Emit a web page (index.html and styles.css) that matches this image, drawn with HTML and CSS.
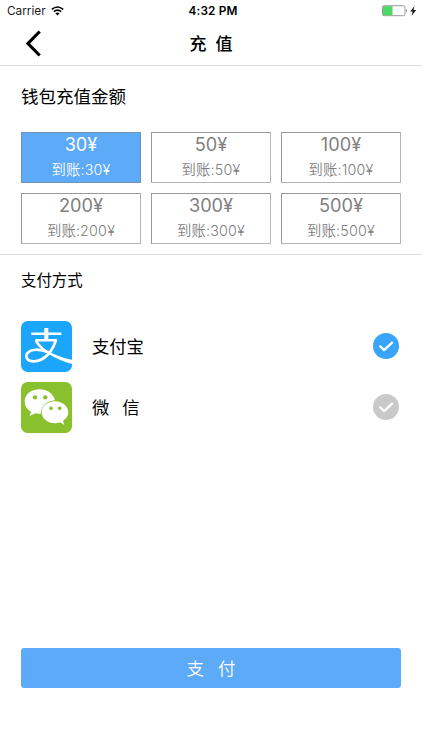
FILE: index.html
```html
<!DOCTYPE html>
<html lang="zh-CN">
<head>
<meta charset="utf-8">
<meta name="viewport" content="width=device-width, initial-scale=1">
<title>充值</title>
<link rel="stylesheet" href="styles.css">
</head>
<body>
<div class="status">
  <div class="carrier"><span>Carrier</span>
    <svg width="13" height="10" viewBox="0 0 13 10" fill="none" stroke="#000" stroke-width="1.6"><path d="M.8 3.4Q6.5-1.4 12.2 3.4M2.8 5.7Q6.5 2.6 10.2 5.7"/><path d="M4.4 7.2Q6.5 5.6 8.6 7.2L6.5 9.5Z" fill="#000" stroke="none"/></svg>
  </div>
  <div class="time">4:32 PM</div>
  <div class="power">
    <svg width="36" height="12" viewBox="0 0 36 12"><rect x=".5" y=".7" width="22.5" height="10" rx="1.5" fill="#fff" stroke="#999"/><path d="M1 1.2h9.5v9H1z" fill="#4cd964"/><path d="M24 4q1.7 1.7 0 3.4z" fill="#555"/><path d="M32.6 1 28.2 6.6h2.6l-1.2 4.3 4.5-5.8h-2.7z" fill="#111"/></svg>
  </div>
</div>
<header class="nav">
  <svg class="back" width="18" height="28" viewBox="0 0 18 28" fill="none" stroke="#000" stroke-width="3.2"><path d="M14.7 1.5 3 13.5 14.7 25.5"/></svg>
  <h1>充<span class="gap"></span>值</h1>
</header>
<section class="amounts">
  <h2>钱包充值金额</h2>
  <div class="grid">
    <div class="card selected"><b>30¥</b><span>到账:30¥</span></div>
    <div class="card"><b>50¥</b><span>到账:50¥</span></div>
    <div class="card"><b>100¥</b><span>到账:100¥</span></div>
    <div class="card"><b>200¥</b><span>到账:200¥</span></div>
    <div class="card"><b>300¥</b><span>到账:300¥</span></div>
    <div class="card"><b>500¥</b><span>到账:500¥</span></div>
  </div>
</section>
<section class="methods">
  <h3>支付方式</h3>
  <div class="method">
    <svg class="logo" viewBox="0 0 153 153"><rect width="153" height="153" rx="20" fill="#1ba5fb"/><g fill="none" stroke="#fff"><path d="M31 38H121M43 58H108" stroke-width="7.5"/><path d="M76 21V58" stroke-width="12"/><path d="M105 56C97 86 72 121 38 121C19 121 11 108 19 97C31 82 58 84 82 94" stroke-width="8"/><path d="M50 59C60 77 75 88 92 96C112 106 134 113 153 116V129C126 121 102 110 81 98C64 88 50 77 41 61Z" fill="#fff" stroke="none"/></g></svg>
    <span class="name">支付宝</span>
    <svg class="check" viewBox="0 0 26 26"><circle cx="13" cy="13" r="13" fill="#38a5fb"/><path d="m7.2 13.4 3.9 3.7 8-7.4" fill="none" stroke="#fff" stroke-width="2.3" stroke-linecap="round" stroke-linejoin="round"/></svg>
  </div>
  <div class="method">
    <svg class="logo" viewBox="0 0 153 153"><rect width="153" height="153" rx="20" fill="#88c02e"/><path d="M56 22C29 22 11 38 11 59C11 72 18 82 30 89L26 102L43 94Q50 96 59 95C61 72 77 57 102 55C97 35 79 22 56 22Z" fill="#fff"/><path d="M102 58C79 58 62 73 62 91C62 110 80 124 102 124Q110 124 117 121L130 129L126 116C136 110 142 102 142 91C142 73 124 58 102 58Z" fill="#fff"/><g fill="#88c02e"><circle cx="42" cy="46" r="6.5"/><circle cx="73" cy="46" r="6.5"/><circle cx="90" cy="79" r="5.5"/><circle cx="116" cy="79" r="5.5"/></g></svg>
    <span class="name">微<span class="gap"></span>信</span>
    <svg class="check" viewBox="0 0 26 26"><circle cx="13" cy="13" r="13" fill="#c9c9c9"/><path d="m7.2 13.4 3.9 3.7 8-7.4" fill="none" stroke="#fff" stroke-width="2.3" stroke-linecap="round" stroke-linejoin="round"/></svg>
  </div>
</section>
<button class="pay">支<span class="gap"></span>付</button>
</body>
</html>
```
FILE: styles.css
```css
* { box-sizing: border-box; }
body {
  margin: 0;
  height: 750px;
  display: flex;
  flex-direction: column;
  background: #fff;
  color: #000;
  font-family: Inter, "Noto Sans CJK SC", sans-serif;
  overflow: hidden;
}
h1, h2, h3 { margin: 0; font-weight: 400; }
svg { display: block; flex: none; }
.gap { display: inline-block; }
.status {
  height: 22px;
  padding: 0 4px 0 7px;
  display: grid;
  grid-template-columns: 1fr auto 1fr;
  align-items: center;
  font-size: 11.8px;
}
.carrier { display: flex; align-items: center; gap: 5px; color: #222; }
.time { font-weight: 600; padding-left: 1px; letter-spacing: .15px; }
.power { justify-self: end; }
.nav {
  height: 44px;
  display: grid;
  grid-template-columns: 1fr auto 1fr;
  align-items: center;
  padding: 0 25px;
  border-bottom: 1px solid #dcdcdc;
}
.nav h1 { font-size: 17px; line-height: 24px; font-weight: 500; }
.nav .gap { width: 9px; }
.amounts { height: 189px; padding: 18px 21px 0; border-bottom: 1px solid #dcdcdc; }
.amounts h2 { font-size: 17.5px; line-height: 26px; }
.grid {
  margin-top: 21.6px;
  display: grid;
  grid-template-columns: repeat(3, 1fr);
  gap: 10px;
}
.card {
  height: 51px;
  border: 1px solid #b5b5b5;
  border-top-color: #999;
  border-left-color: #999;
  color: #808080;
  display: flex;
  flex-direction: column;
  align-items: center;
}
.card b { font-size: 18.2px; line-height: 23px; font-weight: 400; }
.card span { font-size: 14.3px; line-height: 27px; font-weight: 350; letter-spacing: .2px; }
.card.selected { background: #5caaf8; border-color: #7293b5; color: #fff; }
.methods { padding: 14px 21px 0; }
.methods h3 { font-size: 15.4px; line-height: 24px; margin-bottom: 27px; }
.method { display: flex; align-items: center; height: 51px; margin-bottom: 10px; padding-right: 2px; }
.logo { width: 51px; height: 51px; margin-top: 1px; }
.name { flex: 1; margin-left: 20px; font-size: 17.3px; }
.name .gap { width: 13px; }
.check { width: 26px; height: 26px; }
.pay {
  margin: auto 21px 62px;
  height: 40px;
  flex: none;
  padding: 0;
  border: 0;
  border-radius: 3px;
  background: #5caaf8;
  color: #fff;
  font: 350 17.5px/41px Inter, "Noto Sans CJK SC", sans-serif;
}
.pay .gap { width: 14px; }
```
